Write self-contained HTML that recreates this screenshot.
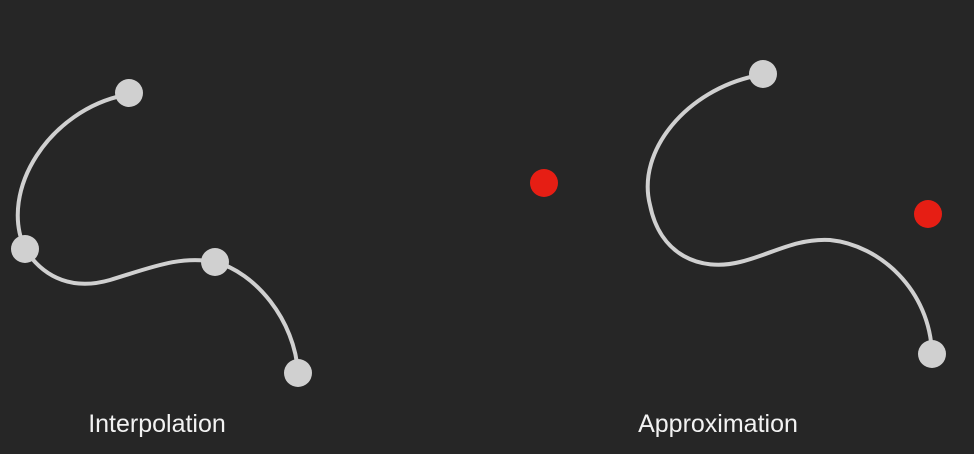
<!DOCTYPE html>
<html><head><style>
html,body{margin:0;padding:0;background:#262626;width:974px;height:454px;overflow:hidden}
svg{display:block}
text{font-family:"Liberation Sans",sans-serif;font-size:25px;fill:#f2f2f2}
</style></head><body>
<svg width="974" height="454" viewBox="0 0 974 454">
<rect width="974" height="454" fill="#262626"/>
<g fill="none" stroke="#d0d0d0" stroke-width="4" stroke-linecap="round">
<path d="M125,95 C50,110 -2,190 25,249 C45,280 75,290 110,280 C150,268 180,255 215,262 C255,272 295,320 298,373"/>
<path d="M755,76 C688,90 636,150 650,205 C660,255 700,272 740,262 C770,255 795,238 830,240 C880,245 930,290 932,354"/>
</g>
<g fill="#d0d0d0">
<circle cx="129" cy="93" r="14"/>
<circle cx="25" cy="249" r="14"/>
<circle cx="215" cy="262" r="14"/>
<circle cx="298" cy="373" r="14"/>
<circle cx="763" cy="74" r="14"/>
<circle cx="932" cy="354" r="14"/>
</g>
<g fill="#e61e14">
<circle cx="544" cy="183" r="14"/>
<circle cx="928" cy="214" r="14"/>
</g>
<text x="157" y="432" text-anchor="middle">Interpolation</text>
<text x="718" y="432" text-anchor="middle">Approximation</text>
</svg>
</body></html>
